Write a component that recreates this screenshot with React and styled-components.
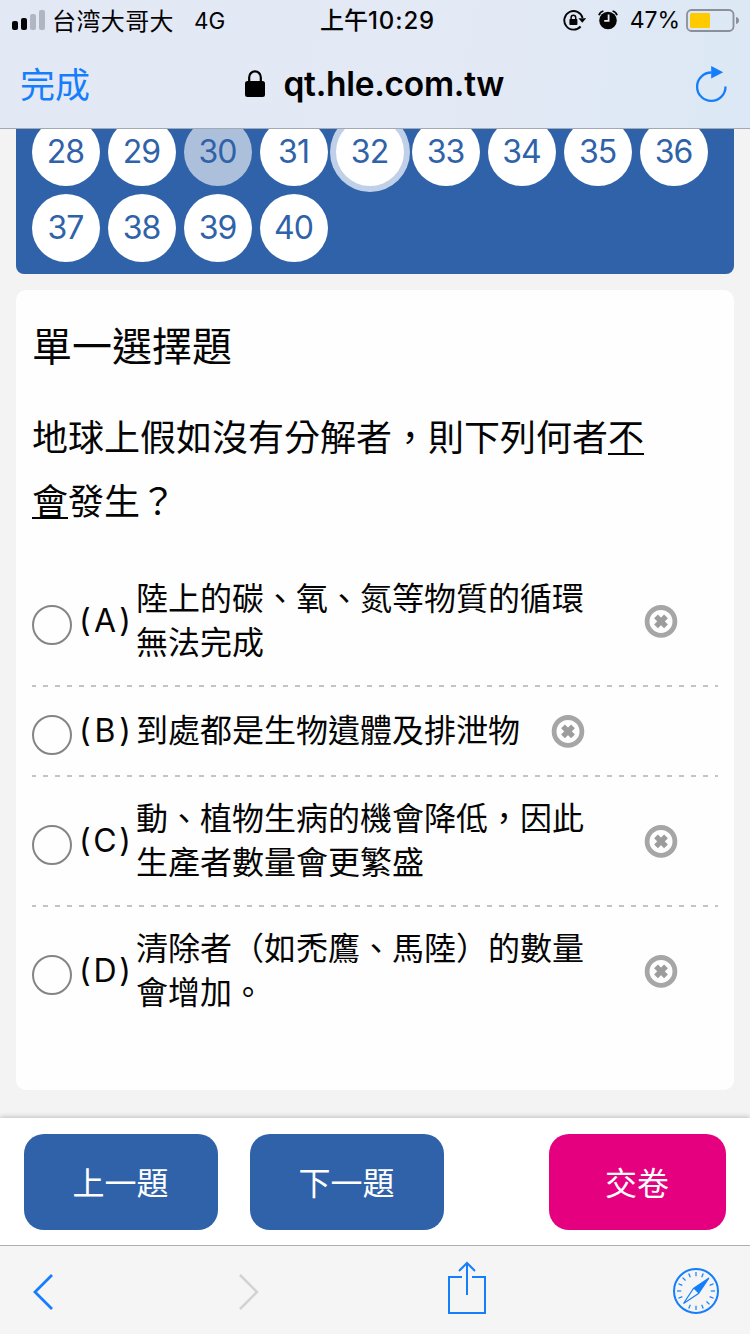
import React from "react";
import styled, { createGlobalStyle } from "styled-components";

const firstRow = [28, 29, 30, 31, 32, 33, 34, 35, 36];
const secondRow = [37, 38, 39, 40];

const options = [
    { key: "A", lines: ["陸上的碳、氧、氮等物質的循環", "無法完成"], gap: 61 },
    { key: "B", lines: ["到處都是生物遺體及排泄物"], gap: 32 },
    { key: "C", lines: ["動、植物生病的機會降低，因此", "生產者數量會更繁盛"], gap: 61 },
    { key: "D", lines: ["清除者（如禿鷹、馬陸）的數量", "會增加。"], gap: 61 },
];

const ticks = Array.from({ length: 16 }, (_, i) => i * 22.5).filter(
    (a) => a !== 45 && a !== 225
);

const SignalIcon = () => (
    <svg width="34" height="40" viewBox="0 0 34 40">
        <rect x="0" y="21" width="6" height="9" rx="2" fill="#050505" />
        <rect x="9" y="18" width="6" height="12" rx="2" fill="#050505" />
        <rect x="18" y="14" width="6" height="16" rx="2" fill="#b1b6c2" />
        <rect x="27" y="10" width="6" height="20" rx="2" fill="#b1b6c2" />
    </svg>
);

const RotationLockIcon = () => (
    <svg width="24" height="40" viewBox="0 0 24 40" fill="none">
        <path d="M17.6 26.5A9.3 9.3 0 1 1 19.6 18" stroke="#050505" strokeWidth="1.9" />
        <path d="M15.4 18.2h7.8l-3.9 4.6z" fill="#050505" />
        <rect x="6.4" y="19" width="8" height="6" rx="0.8" fill="#050505" />
        <path d="M8.1 19.4v-1.8a2.3 2.3 0 0 1 4.6 0v1.8" stroke="#050505" strokeWidth="1.5" />
    </svg>
);

const AlarmIcon = () => (
    <svg width="20" height="40" viewBox="0 0 20 40" fill="none">
        <circle cx="10" cy="20.5" r="8.8" fill="#050505" />
        <path d="M1 15.2q.8-3.2 4.4-4.2M19 15.2q-.8-3.2-4.4-4.2" stroke="#050505" strokeWidth="1.8" />
        <path d="M10.6 14.6v6.2H6.2" stroke="#e3e9f5" strokeWidth="1.8" />
    </svg>
);

const BatteryIcon = () => (
    <svg width="53" height="40" viewBox="0 0 53 40">
        <rect x="1" y="10" width="46.5" height="21" rx="4.5" fill="none" stroke="#8a8f99" strokeWidth="1.8" />
        <rect x="4" y="13" width="20" height="15" rx="1.5" fill="#ffcb00" />
        <path d="M50 17q3 .8 3 3.5T50 24z" fill="#8a8f99" />
    </svg>
);

const LockIcon = () => (
    <svg width="20" height="28" viewBox="0 0 20 28" fill="none">
        <rect x="0" y="11" width="20" height="16" rx="2.5" fill="#000" />
        <path d="M4.2 12V7.2a5.8 5.8 0 0 1 11.6 0V12" stroke="#000" strokeWidth="2.2" />
    </svg>
);

const ReloadIcon = () => (
    <svg width="32" height="38" viewBox="0 0 32 38" fill="none">
        <path d="M16.5 7.5A14.2 14.2 0 1 0 30.5 21.5" stroke="#167efb" strokeWidth="2.3" />
        <path d="M16.2 1l12 6.2-12 6.2z" fill="#167efb" />
    </svg>
);

const RemoveIcon = () => (
    <svg width="34" height="34" viewBox="0 0 34 34" fill="none">
        <circle cx="17" cy="17.4" r="13.9" stroke="#a6a6a6" strokeWidth="4.8" />
        <path d="M12 12.4l10 10M22 12.4l-10 10" stroke="#9c9c9c" strokeWidth="5.4" />
    </svg>
);

const BackIcon = () => (
    <svg width="22" height="38" viewBox="0 0 22 38" fill="none">
        <path d="M20 3L3 20l17 17" stroke="#167efb" strokeWidth="2.8" />
    </svg>
);

const ForwardIcon = () => (
    <svg width="22" height="38" viewBox="0 0 22 38" fill="none">
        <path d="M1 3l17 17L1 37" stroke="#d2d3d5" strokeWidth="2.5" />
    </svg>
);

const ShareIcon = () => (
    <svg width="40" height="60" viewBox="0 0 40 60" fill="none" stroke="#147efb" strokeWidth="2">
        <path d="M15 16H2v36h36V16H25" />
        <path d="M20 34V2M12 10l8-8 8 8" />
    </svg>
);

const CompassIcon = () => (
    <svg width="48" height="48" viewBox="0 0 48 48" fill="none">
        <circle cx="24" cy="24" r="22" stroke="#147efb" strokeWidth="2" />
        {ticks.map((a) => (
            <path key={a} d="M24 5v4.2" stroke="#147efb" strokeWidth="1.2" transform={`rotate(${a} 24 24)`} />
        ))}
        <path d="M37 11L21.5 21.5l5 5z" fill="#147efb" />
        <path d="M37 11L21.5 21.5 11.5 36.5 26.5 26.5z" stroke="#147efb" strokeWidth="1.2" />
    </svg>
);

const App = () => {
    return (
        <>
            <GlobalStyle />
            <Screen>
                <Header>
                    <StatusBar>
                        <StatusLeft>
                            <SignalIcon />
                            <Carrier>台湾大哥大</Carrier>
                            <Network>4G</Network>
                        </StatusLeft>
                        <Clock>上午<b>10:29</b></Clock>
                        <StatusRight>
                            <RotationLockIcon />
                            <AlarmIcon />
                            <Percent>47%</Percent>
                            <BatteryIcon />
                        </StatusRight>
                    </StatusBar>
                    <AddressBar>
                        <Done>完成</Done>
                        <Address>
                            <LockIcon />
                            <Host>qt.hle.com.tw</Host>
                        </Address>
                        <ReloadIcon />
                    </AddressBar>
                </Header>
                <Content>
                    <NumberPanel>
                        {[...firstRow, ...secondRow].map((n) => (
                            <NumberButton key={n} $done={n === 30} $current={n === 32}>
                                {n}
                            </NumberButton>
                        ))}
                    </NumberPanel>
                    <Card>
                        <Title>單一選擇題</Title>
                        <Question>
                            地球上假如沒有分解者，則下列何者<u>不<br />會</u>發生？
                        </Question>
                        {options.map((o) => (
                            <Option key={o.key} $tall={o.lines.length > 1}>
                                <Radio />
                                <Letter>
                                    <span>(</span>
                                    <span>{o.key}</span>
                                    <span>)</span>
                                </Letter>
                                <Answer $gap={o.gap}>
                                    {o.lines.map((line) => (
                                        <div key={line}>{line}</div>
                                    ))}
                                </Answer>
                                <RemoveIcon />
                            </Option>
                        ))}
                    </Card>
                </Content>
                <Actions>
                    <ActionButton>上一題</ActionButton>
                    <ActionButton>下一題</ActionButton>
                    <SubmitButton>交卷</SubmitButton>
                </Actions>
                <Toolbar>
                    <BackIcon />
                    <ForwardIcon />
                    <ShareIcon />
                    <CompassIcon />
                </Toolbar>
            </Screen>
        </>
    );
};

const GlobalStyle = createGlobalStyle`
  * {
    box-sizing: border-box;
  }
  body {
    margin: 0;
    font-family: Inter, "Noto Sans CJK TC", sans-serif;
    color: #050505;
  }
  svg {
    display: block;
    flex: none;
  }
`;
const Screen = styled.div`
  width: 750px;
  height: 1334px;
  display: flex;
  flex-direction: column;
  overflow: hidden;
  background-color: #f3f3f3;
`;
const Header = styled.header`
  flex: none;
  height: 129px;
  background: linear-gradient(100deg, #e3e8f5 0%, #e3e9f5 60%, #dce8f5 100%);
  border-bottom: 1px solid #a3a9b3;
`;
const StatusBar = styled.div`
  height: 40px;
  display: grid;
  grid-template-columns: 308px 1fr auto;
  padding: 0 11px 0 12px;
  white-space: nowrap;
  line-height: 40px;
`;
const StatusLeft = styled.div`
  display: flex;
`;
const Carrier = styled.span`
  font-family: "Noto Sans CJK SC", sans-serif;
  font-size: 24px;
  letter-spacing: 0.4px;
  line-height: 39px;
  margin-left: 6px;
`;
const Network = styled.span`
  font-size: 22.5px;
  margin-left: 20px;
  line-height: 41px;
`;
const Clock = styled.div`
  font-size: 24px;
  font-weight: 500;
  line-height: 41px;
  b {
    font-weight: 550;
    font-size: 24px;
    letter-spacing: 0.9px;
  }
`;
const StatusRight = styled.div`
  display: flex;
  svg:first-child {
    margin-right: 11px;
  }
`;
const Percent = styled.span`
  font-size: 23px;
  letter-spacing: -0.1px;
  line-height: 41px;
  margin: 0 6px 0 12px;
`;
const AddressBar = styled.div`
  height: 88px;
  display: flex;
  align-items: center;
  justify-content: space-between;
  padding: 0 23px 0 20px;
`;
const Done = styled.span`
  font-size: 35px;
  padding-bottom: 4px;
  color: #167efb;
`;
const Address = styled.div`
  display: flex;
  align-items: center;
  gap: 19px;
  padding-right: 38px;
`;
const Host = styled.span`
  width: 219px;
  font-size: 33.5px;
  font-weight: 600;
  letter-spacing: -0.3px;
  color: #000;
`;
const Content = styled.main`
  flex: 1;
  min-height: 0;
  overflow: hidden;
  padding: 0 16px;
`;
const NumberPanel = styled.div`
  display: grid;
  grid-template-columns: repeat(9, 68px);
  gap: 8px;
  margin-top: -11px;
  padding: 0 16px 12px;
  background-color: #2f62a8;
  border-radius: 0 0 8px 8px;
`;
const NumberButton = styled.button`
  height: 68px;
  padding: 0 1px 2px 0;
  border: 0;
  border-radius: 50%;
  background-color: ${(props) => (props.$done ? "#acc0dc" : "#fff")};
  box-shadow: ${(props) => (props.$current ? "0 0 0 6px #c0d0e8" : "none")};
  color: #2f62a8;
  font-family: inherit;
  font-size: 32px;
  font-weight: 370;
  letter-spacing: -1px;
`;
const Card = styled.section`
  height: 800px;
  margin-top: 16px;
  padding: 25px 16px 0;
  background-color: #fefefe;
  border-radius: 10px;
`;
const Title = styled.h2`
  margin: 0;
  font-size: 40px;
  font-weight: 400;
  line-height: 64px;
`;
const Question = styled.p`
  margin: 27px 0 23px;
  font-size: 36px;
  line-height: 64px;
  u {
    text-decoration-thickness: 2px;
    text-underline-offset: 2px;
    text-decoration-skip-ink: none;
  }
`;
const Option = styled.label`
  height: ${(props) => (props.$tall ? 130 : 90)}px;
  display: flex;
  align-items: center;
  padding-bottom: 2px;
  &:not(:last-child) {
    background: repeating-linear-gradient(90deg, #c4c4c4 0 4px, transparent 4px 11px, #c4c4c4 11px 12px)
      bottom / 100% 2px no-repeat;
  }
`;
const Radio = styled.span`
  flex: none;
  width: 40px;
  height: 40px;
  margin-top: 8px;
  border: 2px solid #858585;
  border-radius: 50%;
`;
const Letter = styled.span`
  width: 52px;
  margin: 0 5px 2px 7px;
  display: flex;
  justify-content: space-between;
  font-size: 32px;
  font-weight: 380;
`;
const Answer = styled.div`
  margin-right: ${(props) => props.$gap - 1}px;
  font-size: 32px;
  line-height: 44px;
  white-space: nowrap;
`;
const Actions = styled.footer`
  flex: none;
  height: 127px;
  display: flex;
  align-items: flex-start;
  gap: 32px;
  padding: 16px 24px 0;
  background-color: #fff;
  box-shadow: 0 -1px 5px rgba(0, 0, 0, 0.22);
  z-index: 1;
`;
const ActionButton = styled.button`
  width: 194px;
  height: 96px;
  padding: 0 1px 3px 0;
  border: 0;
  border-radius: 20px;
  background-color: #2f62a8;
  color: #fff;
  font-family: inherit;
  font-size: 32px;
`;
const SubmitButton = styled(ActionButton)`
  width: 177px;
  margin-left: auto;
  background-color: #e5007f;
`;
const Toolbar = styled.nav`
  flex: none;
  height: 89px;
  display: flex;
  align-items: center;
  justify-content: space-between;
  padding: 2px 30px 0 32px;
  background-color: #f5f5f5;
  border-top: 1px solid #a9afb5;
  z-index: 1;
`;
export default App;
